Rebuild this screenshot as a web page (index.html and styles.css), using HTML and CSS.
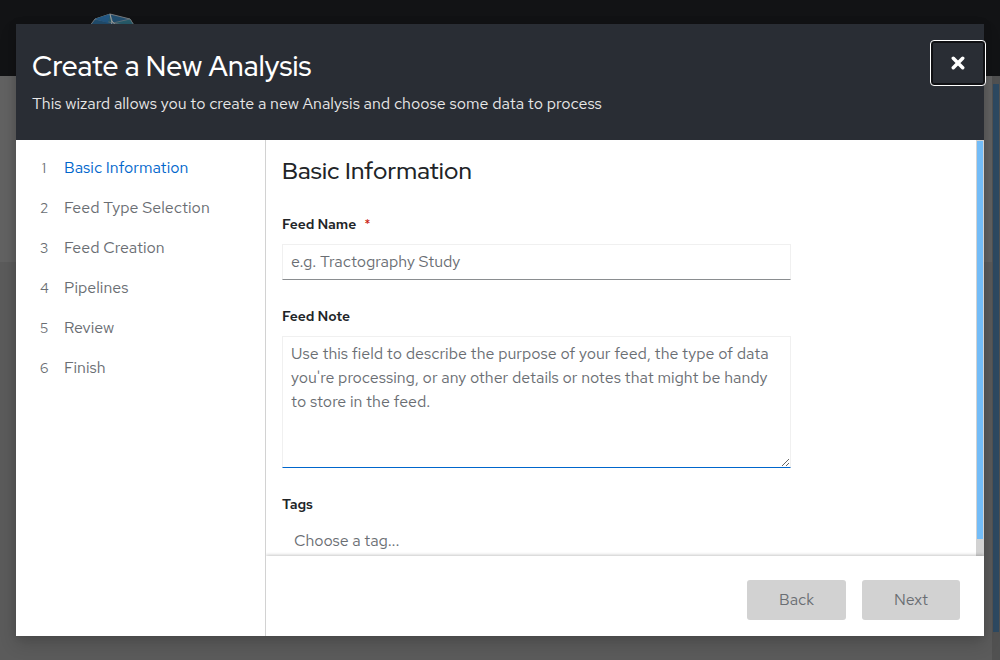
FILE: index.html
```html
<!DOCTYPE html>
<html lang="en">
<head>
<meta charset="utf-8">
<title>Create a New Analysis</title>
<link rel="stylesheet" href="styles.css">
</head>
<body>
<div class="page">
  <div class="masthead">
    <svg class="logo" width="48" height="48" viewBox="0 0 48 48">
      <path d="M1 14 7 6 22 1 42 6 47 14 46 36 24 47 2 36Z" fill="#224f70" stroke="#777b7e"/>
      <path d="M22 1 25 10 42 6 47 14 25 10 7 6" fill="#285e6d" stroke="#777b7e" stroke-width=".7"/>
      <path d="M7 6 20 10 22 1 7 6" fill="#245884"/>
      <path d="M22 1 24 10 20 15M24 8 31 16" fill="none" stroke="#9aa0a2"/>
    </svg>
  </div>
  <div class="page-top"></div>
  <div class="page-rest"></div>
</div>
<div class="page-scroll"><div class="page-thumb"></div></div>
<div class="backdrop">
  <div class="wizard">
    <header class="header">
      <div>
        <h1 class="title">Create a New Analysis</h1>
        <p class="description">This wizard allows you to create a new Analysis and choose some data to process</p>
      </div>
      <button class="close" aria-label="Close">
        <svg width="14" height="14" viewBox="0 0 14 14"><path d="M2.3 2.3 11.7 11.7M11.7 2.3 2.3 11.7" stroke="#fff" stroke-width="3.5" stroke-linecap="round"/></svg>
      </button>
    </header>
    <div class="body">
      <nav class="nav">
        <div class="step current"><span class="num">1</span><span>Basic Information</span></div>
        <div class="step"><span class="num">2</span><span>Feed Type Selection</span></div>
        <div class="step"><span class="num">3</span><span>Feed Creation</span></div>
        <div class="step"><span class="num">4</span><span>Pipelines</span></div>
        <div class="step"><span class="num">5</span><span>Review</span></div>
        <div class="step"><span class="num">6</span><span>Finish</span></div>
      </nav>
      <div class="main">
        <div class="scroll-area">
          <div class="form">
            <h2 class="subtitle">Basic Information</h2>
            <label class="label"><span>Feed Name</span><span class="required">*</span></label>
            <input class="input" placeholder="e.g. Tractography Study">
            <label class="label">Feed Note</label>
            <textarea class="textarea" placeholder="Use this field to describe the purpose of your feed, the type of data you're processing, or any other details or notes that might be handy to store in the feed."></textarea>
            <label class="label">Tags</label>
            <div class="choose">Choose a tag...</div>
          </div>
          <div class="track"><div class="thumb"></div></div>
        </div>
        <footer class="footer">
          <button class="btn back">Back</button>
          <button class="btn next">Next</button>
        </footer>
      </div>
    </div>
  </div>
</div>
</body>
</html>
```
FILE: styles.css
```css
* { box-sizing: border-box; }
body { margin: 0; height: 660px; overflow: hidden; font: 16px/24px "Red Hat Text", Lato, sans-serif; color: #212427; }
.page { height: 660px; display: flex; flex-direction: column; background: #5b5b5b; }
.masthead { height: 76px; padding: 13px 0 0 88px; background: #121315; }
.logo { display: block; }
.page-top { height: 186px; background: #626262; }
.page-rest { flex: 1; background: #5b5b5b; }
.page-scroll { position: absolute; right: 0; top: 76px; width: 8px; height: 584px; padding: 8px 1px 0; background: #515151; }
.page-thumb { height: 548px; background: #2d4961; }
.backdrop { position: absolute; inset: 0; padding: 24px 16px; }
.wizard { height: 612px; display: flex; flex-direction: column; background: #fff; box-shadow: 0 8px 16px rgba(3,3,3,.16), 0 0 8px rgba(3,3,3,.12); }
.header { height: 116px; flex: none; display: flex; justify-content: space-between; padding: 16px 0 0 16px; background: #292d34; color: #fff; }
.title { margin: 8px 0 7px; font: 500 28px/36px "Red Hat Display", Lato, sans-serif; letter-spacing: .2px; }
.description { margin: 0; padding-top: 1px; color: #e8e8e8; }
.close { width: 56px; height: 46px; margin-right: -2px; padding: 0; display: flex; align-items: center; justify-content: center; background: #292d34; border: 1px solid #fff; border-radius: 4px; box-shadow: inset 0 0 0 2px #101114; }
.body { flex: 1; display: flex; min-height: 0; }
.nav { width: 250px; flex: none; padding: 16px 24px; display: flex; flex-direction: column; gap: 16px; border-right: 1px solid #d2d2d2; color: #6a6e73; }
.step { display: flex; height: 24px; gap: 16px; }
.current span:last-child { color: #06c; }
.num { width: 8px; flex: none; font-size: 14px; text-align: center; }
.main { flex: 1; display: flex; flex-direction: column; min-width: 0; }
.scroll-area { flex: 1; display: flex; min-height: 0; overflow: hidden; }
.form { flex: 1; padding: 15px 0 0 16px; }
.subtitle { margin: 0 0 26px; font: 500 24px/31px "Red Hat Display", Lato, sans-serif; letter-spacing: .18px; }
.label { display: flex; gap: 8px; height: 24px; margin-bottom: 8px; font-size: 14px; line-height: 24px; font-weight: 600; letter-spacing: -.05px; }
.required { color: #c9190b; font-weight: 400; }
.input, .textarea { display: block; width: 509px; padding: 5px 8px; font: inherit; color: #151515; background: #fff; border: 1px solid #f0f0f0; border-bottom-color: #8a8d90; border-radius: 0; outline: none; }
.input { height: 36px; margin-bottom: 24px; padding-bottom: 7px; letter-spacing: -.04px; }
.textarea { height: 132px; margin-bottom: 24px; border-bottom-color: #06c; resize: both; }
.input::placeholder, .textarea::placeholder { color: #6a6e73; opacity: 1; }
.choose { padding: 5px 12px; color: #6a6e73; letter-spacing: -.1px; }
.track { width: 8px; padding: 1px 1px 0; background: #d2d2d2; }
.thumb { height: 398px; background: #73bcf7; }
.footer { height: 80px; flex: none; display: flex; justify-content: flex-end; gap: 16px; padding: 24px 24px 16px; background: #fff; box-shadow: 0 -1px 3px rgba(3,3,3,.22); clip-path: inset(-4px 0 0 0); }
.btn { height: 40px; padding: 0; border: 0; border-radius: 3px; background: #d2d2d2; color: #6a6e73; font: inherit; }
.back { width: 99px; }
.next { width: 98px; }
```
